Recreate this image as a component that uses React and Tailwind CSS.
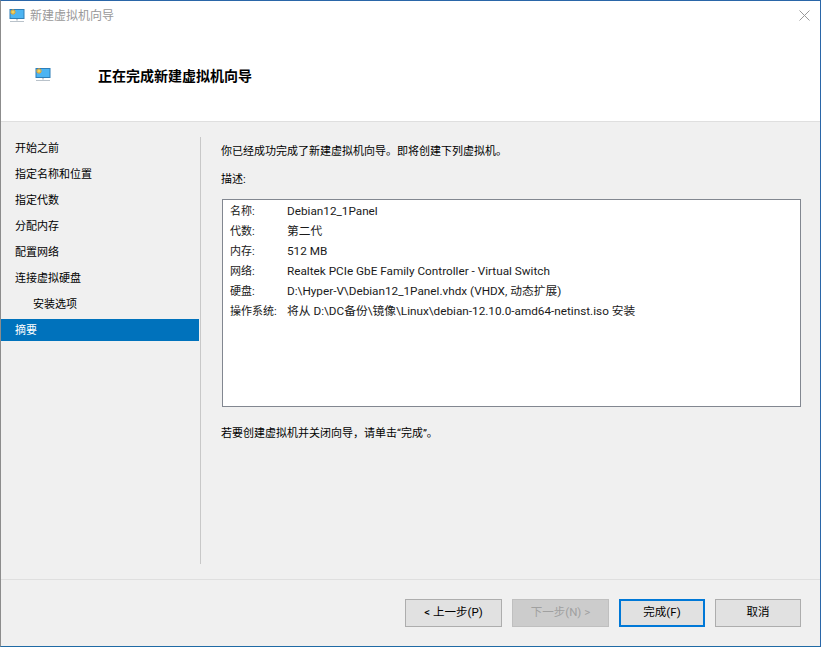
const font = { fontFamily: 'Roboto, "Noto Sans CJK SC", sans-serif' };

const steps = [
  { label: '开始之前' },
  { label: '指定名称和位置' },
  { label: '指定代数' },
  { label: '分配内存' },
  { label: '配置网络' },
  { label: '连接虚拟硬盘' },
  { label: '安装选项', sub: true },
  { label: '摘要', active: true },
];

const details = [
  ['名称:', 'Debian12_1Panel'],
  ['代数:', '第二代'],
  ['内存:', '512 MB'],
  ['网络:', 'Realtek PCIe GbE Family Controller - Virtual Switch'],
  ['硬盘:', 'D:\\Hyper-V\\Debian12_1Panel.vhdx (VHDX, 动态扩展)'],
  ['操作系统:', '将从 D:\\DC备份\\镜像\\Linux\\debian-12.10.0-amd64-netinst.iso 安装'],
];

const VmIcon = ({ className }) => (
  <svg className={className} viewBox="0 0 16 16">
    <rect x="0.5" y="1" width="15" height="10" fill="#2f7fb8" />
    <rect x="1.5" y="2" width="13" height="8" fill="#4db4f2" />
    <g stroke="#f0a020" strokeWidth="1">
      <path d="M4 1v6M1 4h6M2 2l4 4M6 2l-4 4" />
    </g>
    <circle cx="4" cy="4" r="1.6" fill="#ffd24a" />
    <rect x="7" y="11" width="2" height="1.5" fill="#c8ccd0" />
    <rect x="1" y="13" width="14" height="1" fill="#b9c2ca" />
  </svg>
);

const Button = ({ label, width, disabled, primary }) => (
  <div
    className={`h-[28px] flex items-center justify-center text-[11.5px] ${width} ${
      primary
        ? 'border-2 border-[#0078d7] bg-[#e1e1e1] text-black'
        : disabled
          ? 'border border-[#bfbfbf] bg-[#cccccc] text-[#a0a0a0]'
          : 'border border-[#adadad] bg-[#e1e1e1] text-black'
    }`}
  >
    <span className="whitespace-pre">{label}</span>
  </div>
);

export default function App() {
  return (
    <div
      className="w-[821px] h-[647px] flex flex-col bg-[#f0f0f0] border-l border-l-[#8c8c8c] border-r border-r-[#2a66a8] border-t border-t-[#2a66a8] border-b border-b-[#1f6aa5] overflow-hidden text-xs text-black"
      style={font}
    >
      <div className="bg-white h-[121px] shrink-0 border-b border-[#dfdfdf] flex flex-col">
        <div className="h-[29px] flex items-center pl-[8px] pr-[10px] shrink-0">
          <VmIcon className="w-[16px] h-[16px]" />
          <span className="ml-[5px] text-xs text-[#999999]">新建虚拟机向导</span>
          <svg className="ml-auto w-[11px] h-[11px]" viewBox="0 0 11 11">
            <path d="M0.5 0.5l10 10M10.5 0.5l-10 10" stroke="#9a9a9a" strokeWidth="1" fill="none" />
          </svg>
        </div>
        <div className="flex items-center pl-[34px] mt-[36px]">
          <VmIcon className="w-[16px] h-[16px] mb-[3px]" />
          <span className="ml-[47px] text-sm font-bold">正在完成新建虚拟机向导</span>
        </div>
      </div>

      <div className="flex h-[457px] shrink-0">
        <div className="w-[198px] shrink-0 pt-[14px] flex flex-col">
          {steps.map((step) =>
            step.active ? (
              <div key={step.label} className="h-[22px] mt-[1px] pt-[2px] flex items-center pl-[14px] text-[11px] bg-[#0072bc] text-white">
                {step.label}
              </div>
            ) : (
              <div key={step.label} className={`h-[26px] flex items-center text-[11px] ${step.sub ? 'pl-[32px]' : 'pl-[14px]'}`}>
                {step.label}
              </div>
            )
          )}
        </div>
        <div className="w-[1px] ml-[1px] mt-[15px] h-[427px] bg-[#c8c8c8] shrink-0" />
        <div className="ml-[20px] w-[580px] flex flex-col pt-[20px]">
          <p className="text-[11px] leading-[20px]">你已经成功完成了新建虚拟机向导。即将创建下列虚拟机。</p>
          <p className="text-[11px] leading-[20px] mt-[8px]">描述:</p>
          <div className="ml-[1px] mt-[9px] h-[208px] bg-white border border-[#828790] pt-[2px] pl-[7px]">
            {details.map(([name, value]) => (
              <div key={name} className="flex h-[20px] items-center text-[11.75px] text-[#1a1a1a]">
                <span className="w-[57px] shrink-0 whitespace-nowrap text-[11px]">{name}</span>
                <span className="whitespace-nowrap">{value}</span>
              </div>
            ))}
          </div>
          <p className="text-[11px] leading-[20px] mt-[17px]">{'若要创建虚拟机并关闭向导\uFF0C请单击“完成”。'}</p>
        </div>
      </div>

      <div className="flex-1 border-t border-[#dfdfdf] flex items-start justify-end pt-[19px] pr-[19px]">
        <Button width="w-[97px]" label="< 上一步(P)" />
        <div className="w-[10px]" />
        <Button width="w-[97px]" disabled label="下一步(N) >" />
        <div className="w-[10px]" />
        <Button width="w-[86px]" primary label="完成(F)" />
        <div className="w-[10px]" />
        <Button width="w-[86px]" label="取消" />
      </div>
    </div>
  );
}
